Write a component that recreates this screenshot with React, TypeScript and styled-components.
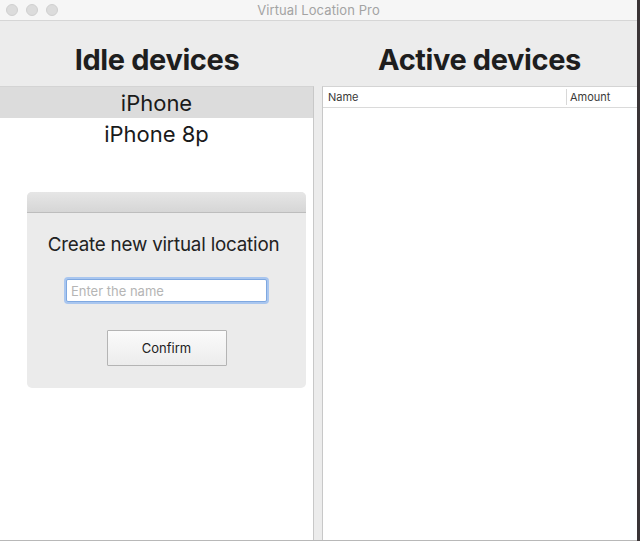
import React from "react";
import styled, { createGlobalStyle } from "styled-components";

const GlobalStyle = createGlobalStyle`
  html, body {
    margin: 0;
    padding: 0;
    background: #3a3436;
  }
  body {
    font-family: Inter, "Liberation Sans", sans-serif;
    color: #1d1d1d;
  }
  * { box-sizing: border-box; }
`;

const idle = ["iPhone", "iPhone 8p"];

const App = () => {
  return (
    <Window>
      <GlobalStyle />
      <TitleBar>
        <Lights>
          <Light />
          <Light />
          <Light />
        </Lights>
        <WindowTitle>Virtual Location Pro</WindowTitle>
      </TitleBar>
      <Body>
        <Column>
          <Heading>Idle devices</Heading>
          <DeviceList>
            {idle.map((name, i) => (
              <DeviceRow key={name} selected={i === 0}>
                {name}
              </DeviceRow>
            ))}
            <Panel>
              <PanelHeader />
              <PanelBody>
                <PanelTitle>Create new virtual location</PanelTitle>
                <NameInput placeholder="Enter the name" autoFocus />
                <ConfirmButton>Confirm</ConfirmButton>
              </PanelBody>
            </Panel>
          </DeviceList>
        </Column>
        <Column>
          <Heading>Active devices</Heading>
          <Table>
            <TableHead>
              <HeadCell>Name</HeadCell>
              <HeadCell divider>Amount</HeadCell>
            </TableHead>
          </Table>
        </Column>
      </Body>
    </Window>
  );
};

export default App;

const Window = styled.div`
  width: 637px;
  height: 541px;
  display: flex;
  flex-direction: column;
  background: #ececec;
  border-bottom: 1px solid #b8b8b8;
  overflow: hidden;
`;

const TitleBar = styled.div`
  position: relative;
  height: 21px;
  flex-shrink: 0;
  display: flex;
  align-items: center;
  justify-content: center;
  background: #f6f6f6;
  border-bottom: 1px solid #d6d6d6;
`;

const Lights = styled.div`
  position: absolute;
  left: 6px;
  top: 4px;
  display: flex;
  gap: 8px;
`;

const Light = styled.span`
  width: 12px;
  height: 12px;
  border-radius: 50%;
  background: #dcdcdc;
  border: 1px solid #d0d0d0;
`;

const WindowTitle = styled.span`
  font-size: 13px;
  color: #a3a3a3;
  letter-spacing: 0.1px;
`;

const Body = styled.div`
  flex: 1;
  display: grid;
  grid-template-columns: 314px 315px;
  column-gap: 8px;
  min-height: 0;
`;

const Column = styled.div`
  display: flex;
  flex-direction: column;
  min-height: 0;
`;

const Heading = styled.h1`
  margin: 0;
  height: 65px;
  display: flex;
  align-items: center;
  justify-content: center;
  padding-top: 12px;
  font-size: 29px;
  font-weight: 700;
  letter-spacing: -0.4px;
  color: #1e1e1e;
`;

const DeviceList = styled.div`
  flex: 1;
  background: #fff;
  border-top: 1px solid #d4d4d4;
  border-right: 1px solid #c8c8c8;
  display: flex;
  flex-direction: column;
`;

const DeviceRow = styled.div<{ selected?: boolean }>`
  height: 31px;
  display: flex;
  align-items: center;
  justify-content: center;
  font-size: 22px;
  color: #1a1a1a;
  background: ${({ selected }) => (selected ? "#dcdcdc" : "#fff")};
`;

const Panel = styled.div`
  margin: 43px 7px 0 27px;
  height: 196px;
  background: #ebebeb;
  border-radius: 5px;
  overflow: hidden;
  display: flex;
  flex-direction: column;
`;

const PanelHeader = styled.div`
  height: 21px;
  background: linear-gradient(#e6e6e6, #d6d6d6);
  border-bottom: 1px solid #bdbdbd;
`;

const PanelBody = styled.div`
  flex: 1;
  display: flex;
  flex-direction: column;
  align-items: center;
  padding-top: 20px;
  padding-right: 6px;
`;

const PanelTitle = styled.div`
  font-size: 18.8px;
  color: #222;
  letter-spacing: -0.2px;
`;

const NameInput = styled.input`
  margin-top: 23px;
  margin-left: 6px;
  width: 201px;
  height: 23px;
  padding: 0 4px;
  font-family: inherit;
  font-size: 13px;
  color: #222;
  background: #fff;
  border: 1px solid #7fa8e0;
  border-radius: 2px;
  box-shadow: 0 0 0 2px #a9c6ef;
  outline: none;
  &::placeholder {
    color: #b5b5b5;
  }
`;

const ConfirmButton = styled.button`
  margin-top: 28px;
  margin-left: 6px;
  width: 120px;
  height: 36px;
  font-family: inherit;
  font-size: 13px;
  color: #222;
  background: linear-gradient(#fbfbfb, #ececec);
  border: 1px solid #b4b4b4;
  border-radius: 1px;
`;

const Table = styled.div`
  flex: 1;
  background: #fff;
  border-top: 1px solid #d4d4d4;
  border-left: 1px solid #c8c8c8;
`;

const TableHead = styled.div`
  height: 21px;
  display: grid;
  grid-template-columns: 243px 1fr;
  border-bottom: 1px solid #dadada;
`;

const HeadCell = styled.div<{ divider?: boolean }>`
  display: flex;
  align-items: center;
  padding-left: ${({ divider }) => (divider ? "3px" : "5px")};
  font-size: 11px;
  color: #3a3a3a;
  border-left: ${({ divider }) => (divider ? "1px solid #d8d8d8" : "none")};
  margin: ${({ divider }) => (divider ? "2px 0" : "0")};
`;
